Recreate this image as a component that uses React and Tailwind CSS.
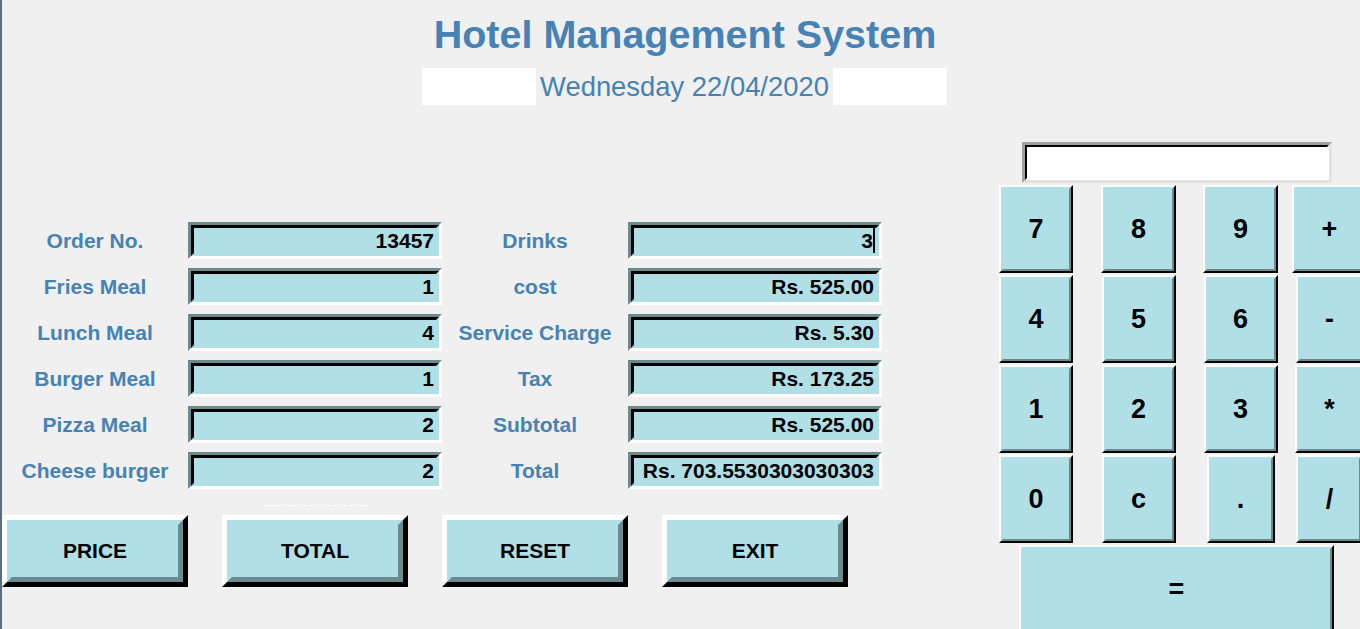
import React from "react";

const FONT = "font-['Liberation_Sans',Arial,sans-serif]";

// order items on the left, bill on the right
const leftRows = [
    ["Order No.", "13457"],
    ["Fries Meal", "1"],
    ["Lunch Meal", "4"],
    ["Burger Meal", "1"],
    ["Pizza Meal", "2"],
    ["Cheese burger", "2"],
];

const rightRows = [
    ["Drinks", "3"],
    ["cost", "Rs. 525.00"],
    ["Service Charge", "Rs. 5.30"],
    ["Tax", "Rs. 173.25"],
    ["Subtotal", "Rs. 525.00"],
    ["Total", "Rs. 703.5530303030303"],
];

const keys = [
    [["7", "w-[74px]"], ["8", "w-[75px]"], ["9", "w-[75px]"], ["+", "w-[75px]"]],
    [["4", "w-[74px]"], ["5", "w-[74px]"], ["6", "w-[74px]"], ["-", "w-[68px]"]],
    [["1", "w-[74px]"], ["2", "w-[74px]"], ["3", "w-[74px]"], ["*", "w-[70px]"]],
    [["0", "w-[74px]"], ["c", "w-[74px]"], [".", "w-[68px]"], ["/", "w-[67px]"]],
];

function Entry({ value, cursor }) {
    return (
        <div className="h-[37px] border-[3px] border-t-[#6b8a8f] border-l-[#6b8a8f] border-r-white border-b-white">
            <div
                className={
                    "h-full border-[3px] border-t-black border-l-black border-r-[#b0e0e6] border-b-[#b0e0e6] bg-[#b0e0e6] flex items-center justify-end overflow-hidden " +
                    (cursor ? "pr-[1px]" : "pr-[2px]")
                }
            >
                <span className="text-[21px] leading-[25px] font-bold text-black whitespace-nowrap">
                    {value}
                </span>
                {cursor && <span className="w-[2px] h-[25px] bg-black" />}
            </div>
        </div>
    );
}

function Label({ text }) {
    return (
        <div className="h-[37px] flex items-center justify-center text-[21px] font-bold text-[#4682b4] whitespace-nowrap">
            {text}
        </div>
    );
}

function BigButton({ text }) {
    return (
        <div className="w-[186px] h-[72px] border-[5px] border-t-white border-l-white border-r-black border-b-black">
            <div className="h-full border-[5px] border-t-[#b0e0e6] border-l-[#b0e0e6] border-r-[#6b8a8f] border-b-[#6b8a8f] bg-[#b0e0e6] flex items-center justify-center">
                <span className="text-[21px] font-bold text-black">{text}</span>
            </div>
        </div>
    );
}

function Key({ text, width, height = "h-[88px]" }) {
    return (
        <div className={width + " " + height + " border-2 border-t-white border-l-white border-r-black border-b-black"}>
            <div className="h-full border-2 border-t-[#b0e0e6] border-l-[#b0e0e6] border-r-[#6b8a8f] border-b-[#6b8a8f] bg-[#b0e0e6] flex items-center justify-center">
                <span className="text-[27px] font-bold text-black leading-none">{text}</span>
            </div>
        </div>
    );
}

export default function App() {
    return (
        <div className={"w-screen h-screen overflow-hidden bg-[#f0f0f0] " + FONT}>
            <div className="w-[1368px] h-[629px] border-l-2 border-[#5b6d82] bg-[#f0f0f0]">
                {/* header */}
                <div className="pt-[14px] text-center text-[39.5px] leading-[40px] font-bold text-[#4682b4]">
                    Hotel Management System
                </div>
                <div className="mt-[14px] h-[37px] flex justify-center items-center gap-[3px] pr-[1px]">
                    <div className="w-[114px] h-full bg-white" />
                    <span className="px-[1px] text-[27.4px] text-[#4682b4] whitespace-nowrap">
                        Wednesday 22/04/2020
                    </span>
                    <div className="w-[114px] h-full bg-white" />
                </div>

                <div className="flex items-start">
                    {/* order form */}
                    <div className="w-[983px] mt-[117px]">
                        <div className="grid grid-cols-[186px_254px_186px_254px] gap-y-[9px]">
                            {leftRows.map(([l, v], i) => (
                                <React.Fragment key={l}>
                                    <Label text={l} />
                                    <Entry value={v} />
                                    <Label text={rightRows[i][0]} />
                                    <Entry value={rightRows[i][1]} cursor={i === 0} />
                                </React.Fragment>
                            ))}
                        </div>
                        <div className="ml-[261px] mt-[16px] w-[104px] border-t border-dashed border-white" />
                        <div className="mt-[9px] flex gap-[34px]">
                            <BigButton text="PRICE" />
                            <BigButton text="TOTAL" />
                            <BigButton text="RESET" />
                            <BigButton text="EXIT" />
                        </div>
                    </div>

                    {/* calculator */}
                    <div className="w-[383px] mt-[37px] flex flex-col gap-[2px]">
                        <div className="ml-[37px] w-[310px] h-[41px] border-[3px] border-t-[#a0a0a0] border-l-[#a0a0a0] border-r-[#e3e3e3] border-b-[#e3e3e3]">
                            <div className="h-full border-2 border-t-black border-l-black border-r-white border-b-white bg-white" />
                        </div>
                        {keys.map((row, r) => (
                            <div key={r} className="grid grid-cols-[102px_103px_101px_77px] justify-items-center">
                                {row.map(([k, w]) => (
                                    <Key key={k} text={k} width={w} />
                                ))}
                            </div>
                        ))}
                        <div className="ml-[34px]">
                            <Key text="=" width="w-[315px]" />
                        </div>
                    </div>
                </div>
            </div>
        </div>
    );
}
